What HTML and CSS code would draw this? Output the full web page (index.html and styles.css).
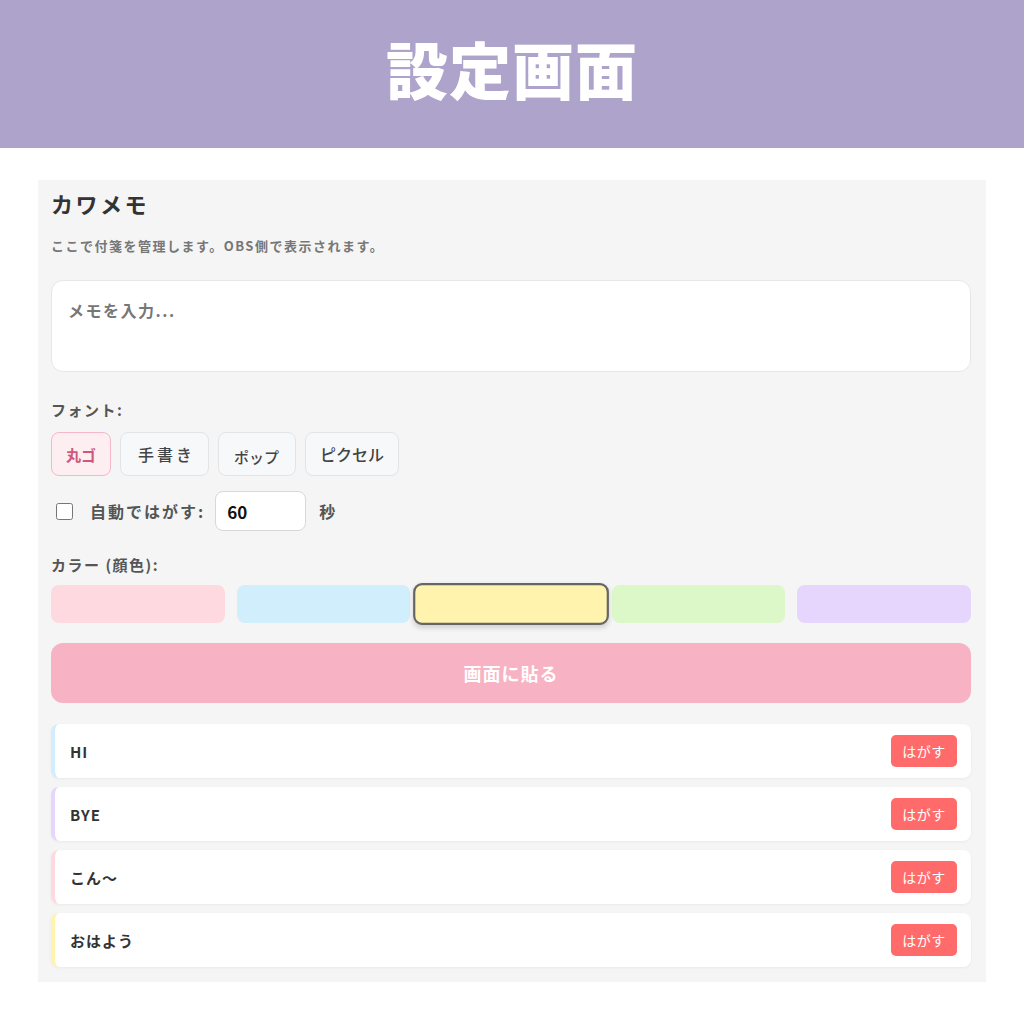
FILE: index.html
```
<!DOCTYPE html>
<html lang="ja">
<head>
    <meta charset="UTF-8">
    <meta name="viewport" content="width=device-width, initial-scale=1.0">
    <title>設定画面</title>
    <link rel="stylesheet" href="styles.css">
</head>
<body>
    <header class="top">
        <h1 class="top-title">設定画面</h1>
    </header>

    <div class="panel">
        <h2 class="app-name">カワメモ</h2>
        <p class="app-desc">ここで付箋を管理します。OBS側で表示されます。</p>

        <textarea class="memo-input" placeholder="メモを入力..."></textarea>

        <p class="label label-font">フォント:</p>
        <div class="fonts">
            <button class="font-btn selected">丸ゴ</button>
            <button class="font-btn hand">手書き</button>
            <button class="font-btn pop">ポップ</button>
            <button class="font-btn">ピクセル</button>
        </div>

        <div class="auto-row">
            <input type="checkbox" class="auto-check">
            <span class="auto-label">自動ではがす:</span>
            <input class="sec-input" value="60">
            <span class="sec-unit">秒</span>
        </div>

        <p class="label label-color">カラー (顔色):</p>
        <div class="swatches">
            <div class="swatch pink"></div>
            <div class="swatch blue"></div>
            <div class="swatch yellow selected"></div>
            <div class="swatch green"></div>
            <div class="swatch purple"></div>
        </div>

        <button class="stick-btn">画面に貼る</button>

        <ul class="memos">
            <li class="memo blue-edge"><span class="memo-text">HI</span><button class="peel">はがす</button></li>
            <li class="memo purple-edge"><span class="memo-text">BYE</span><button class="peel">はがす</button></li>
            <li class="memo pink-edge"><span class="memo-text">こん〜</span><button class="peel">はがす</button></li>
            <li class="memo yellow-edge"><span class="memo-text">おはよう</span><button class="peel">はがす</button></li>
        </ul>
    </div>
</body>
</html>
```
FILE: styles.css
```
body {
    margin: 0;
    background-color: #fff;
    font-family: "Noto Sans CJK JP", "Noto Sans", sans-serif;
    color: #333;
}

.top {
    box-sizing: border-box;
    height: 148px;
    padding-bottom: 12px;
    background-color: #ada3cb;
    display: flex;
    justify-content: center;
    align-items: center;
}

.top-title {
    margin: 0;
    color: #fff;
    font-size: 62px;
    font-weight: 900;
    line-height: 1;
    letter-spacing: 1px;
}

.panel {
    margin: 32px 38px 0;
    padding: 10px 15px 15px 13px;
    background-color: #f4f5f4;
}

.app-name {
    margin: 0;
    font-size: 22px;
    line-height: 26px;
    font-weight: bold;
    color: #333;
    letter-spacing: 2.5px;
}

.app-desc {
    margin: 21px 0 0;
    font-size: 13px;
    line-height: 18px;
    font-weight: bold;
    color: #777;
    letter-spacing: 1.5px;
}

.memo-input {
    display: block;
    box-sizing: border-box;
    width: 100%;
    height: 92px;
    margin-top: 25px;
    padding: 17px 16px;
    border: 1px solid #e6e8e8;
    border-radius: 12px;
    background: #fff;
    font-family: inherit;
    font-size: 16px;
    line-height: 24px;
    letter-spacing: 1.5px;
    resize: none;
    outline: none;
}

.memo-input::placeholder {
    color: #777;
    font-weight: bold;
}

.label {
    margin: 0;
    font-size: 15px;
    line-height: 20px;
    font-weight: bold;
    color: #555;
    letter-spacing: 1.5px;
}

.label-font {
    margin-top: 28px;
}

.fonts {
    display: flex;
    gap: 9px;
    margin-top: 12px;
}

.font-btn {
    height: 44px;
    padding: 0 14px;
    border: 1px solid #e3e4e6;
    border-radius: 8px;
    background-color: #f7f8fa;
    font-family: inherit;
    font-size: 16px;
    font-weight: 500;
    color: #444;
    cursor: pointer;
}

.font-btn.selected {
    background-color: #fdeef2;
    border-color: #f4b8c8;
    color: #d0577a;
    font-size: 15px;
    font-weight: bold;
}

.font-btn.hand {
    letter-spacing: 3px;
    padding: 0 13px 0 17px;
}

.font-btn.pop {
    font-size: 15px;
    padding: 4px 16px 0 15px;
}

.auto-row {
    display: flex;
    align-items: center;
    margin-top: 15px;
    height: 40px;
}

.auto-check {
    width: 17px;
    height: 17px;
    margin: 0 0 0 5px;
}

.auto-label {
    margin-left: 17px;
    font-size: 16px;
    font-weight: bold;
    color: #555;
    letter-spacing: 2px;
}

.sec-input {
    box-sizing: border-box;
    width: 91px;
    height: 40px;
    margin-left: 10px;
    padding: 0 11px;
    border: 1px solid #d8d8d8;
    border-radius: 8px;
    background: #fff;
    font-family: inherit;
    font-size: 17px;
    font-weight: bold;
    color: #111;
    outline: none;
}

.sec-unit {
    margin-left: 13px;
    font-size: 16px;
    font-weight: bold;
    color: #555;
}

.label-color {
    margin-top: 24px;
}

.swatches {
    display: flex;
    gap: 12px;
    margin-top: 10px;
}

.swatch {
    flex: 1;
    height: 38px;
    border-radius: 8px;
    cursor: pointer;
}

.swatch.selected {
    box-sizing: border-box;
    border: 2px solid #666;
    transform: scale(1.1);
    box-shadow: 0 2px 5px rgba(0, 0, 0, 0.15);
}

.pink { background-color: #ffd9e0; }
.blue { background-color: #d0eefb; }
.yellow { background-color: #fff3ae; }
.green { background-color: #dcf7c8; }
.purple { background-color: #e6d5fd; }

.stick-btn {
    display: block;
    width: 100%;
    height: 60px;
    margin-top: 20px;
    border: none;
    border-radius: 12px;
    background-color: #f7b3c4;
    color: #fff;
    font-family: inherit;
    font-size: 18px;
    font-weight: bold;
    letter-spacing: 1px;
    cursor: pointer;
}

.memos {
    list-style: none;
    margin: 21px 0 0;
    padding: 0;
    display: flex;
    flex-direction: column;
    gap: 9px;
}

.memo {
    display: flex;
    align-items: center;
    justify-content: space-between;
    height: 54px;
    padding: 0 14px 0 15px;
    background: #fff;
    border-left: 4px solid #ccc;
    border-radius: 8px;
    box-shadow: 0 1px 3px rgba(0, 0, 0, 0.05);
}

.blue-edge { border-left-color: #d0eefb; }
.purple-edge { border-left-color: #e6d5fd; }
.pink-edge { border-left-color: #ffd9e0; }
.yellow-edge { border-left-color: #fff3ae; }

.memo-text {
    font-size: 15px;
    font-weight: bold;
    color: #333;
    letter-spacing: 1px;
}

.peel {
    width: 66px;
    height: 32px;
    border: none;
    border-radius: 5px;
    background-color: #ff6b6b;
    color: #fff;
    font-family: inherit;
    font-size: 14px;
    letter-spacing: 0.5px;
    cursor: pointer;
}
```
